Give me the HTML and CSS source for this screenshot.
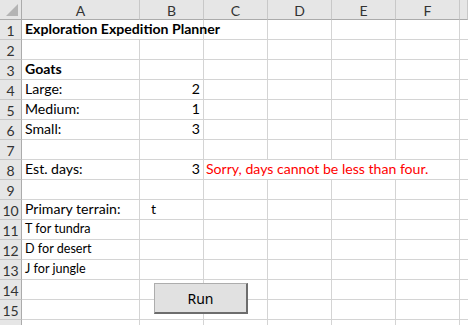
FILE: index.html
```html
<!DOCTYPE html>
<html>
<head>
<meta charset="utf-8">
<link rel="stylesheet" href="styles.css">
</head>
<body>
<div class="sheet">
  <div class="grid">
    <div class="corner"><svg width="14" height="14" viewBox="0 0 14 14"><polygon points="13,1 13,13 1,13" fill="#b4b4b4"/></svg></div>
    <div class="ch">A</div><div class="ch">B</div><div class="ch">C</div><div class="ch">D</div><div class="ch">E</div><div class="ch">F</div><div class="ch last"></div>

    <div class="rh">1</div><div class="c span2 bold">Exploration Expedition Planner</div><div class="c"></div><div class="c"></div><div class="c"></div><div class="c"></div><div class="c last"></div>
    <div class="rh">2</div><div class="c"></div><div class="c"></div><div class="c"></div><div class="c"></div><div class="c"></div><div class="c"></div><div class="c last"></div>
    <div class="rh">3</div><div class="c bold">Goats</div><div class="c"></div><div class="c"></div><div class="c"></div><div class="c"></div><div class="c"></div><div class="c last"></div>
    <div class="rh">4</div><div class="c">Large:</div><div class="c num">2</div><div class="c"></div><div class="c"></div><div class="c"></div><div class="c"></div><div class="c last"></div>
    <div class="rh">5</div><div class="c">Medium:</div><div class="c num">1</div><div class="c"></div><div class="c"></div><div class="c"></div><div class="c"></div><div class="c last"></div>
    <div class="rh">6</div><div class="c">Small:</div><div class="c num">3</div><div class="c"></div><div class="c"></div><div class="c"></div><div class="c"></div><div class="c last"></div>
    <div class="rh">7</div><div class="c"></div><div class="c"></div><div class="c"></div><div class="c"></div><div class="c"></div><div class="c"></div><div class="c last"></div>
    <div class="rh">8</div><div class="c">Est. days:</div><div class="c num">3</div><div class="c span4 red">Sorry, days cannot be less than four.</div><div class="c last"></div>
    <div class="rh">9</div><div class="c"></div><div class="c"></div><div class="c"></div><div class="c"></div><div class="c"></div><div class="c"></div><div class="c last"></div>
    <div class="rh">10</div><div class="c">Primary terrain:</div><div class="c indent">t</div><div class="c"></div><div class="c"></div><div class="c"></div><div class="c"></div><div class="c last"></div>
    <div class="rh">11</div><div class="c small">T for tundra</div><div class="c"></div><div class="c"></div><div class="c"></div><div class="c"></div><div class="c"></div><div class="c last"></div>
    <div class="rh">12</div><div class="c small">D for desert</div><div class="c"></div><div class="c"></div><div class="c"></div><div class="c"></div><div class="c"></div><div class="c last"></div>
    <div class="rh">13</div><div class="c small">J for jungle</div><div class="c"></div><div class="c"></div><div class="c"></div><div class="c"></div><div class="c"></div><div class="c last"></div>
    <div class="rh">14</div><div class="c"></div><div class="c"></div><div class="c"></div><div class="c"></div><div class="c"></div><div class="c"></div><div class="c last"></div>
    <div class="rh">15</div><div class="c"></div><div class="c"></div><div class="c"></div><div class="c"></div><div class="c"></div><div class="c"></div><div class="c last"></div>
    <div class="rh"></div><div class="c"></div><div class="c"></div><div class="c"></div><div class="c"></div><div class="c"></div><div class="c"></div><div class="c last"></div>
  </div>
  <button class="run">Run</button>
</div>
</body>
</html>
```

FILE: styles.css
```css
* { box-sizing: border-box; }
html, body { margin: 0; padding: 0; background: #fff; overflow: hidden; }
body { width: 468px; height: 325px; }
.sheet { position: relative; width: 468px; height: 325px; overflow: hidden; }
.grid {
  display: grid;
  grid-template-columns: 22px 118px 64px 64px 64px 64px 64px 1fr;
  grid-template-rows: 20px repeat(16, 20px);
  font-family: Lato, "Liberation Sans", sans-serif;
  font-size: 14.1px;
  color: #000;
}
.corner {
  background: #e6e6e6;
  border-right: 1px solid #ababab;
  border-bottom: 1px solid #ababab;
  display: flex; align-items: flex-end; justify-content: flex-end;
  padding: 0 2px 2px 0;
}
.ch {
  background: #e6e6e6;
  border-right: 1px solid #c8c8c8;
  border-bottom: 1px solid #ababab;
  display: flex; align-items: center; justify-content: center;
  color: #333;
  font-size: 14px;
  padding-top: 1px;
}
.rh {
  background: #e6e6e6;
  border-right: 1px solid #ababab;
  border-bottom: 1px solid #c8c8c8;
  display: flex; align-items: center; justify-content: center;
  color: #333;
  font-size: 14px;
  padding-top: 1px;
}
.c {
  border-right: 1px solid #d4d4d4;
  border-bottom: 1px solid #d4d4d4;
  display: flex; align-items: flex-end;
  padding: 0 3px 1px 3px;
  white-space: nowrap;
  line-height: 18px;
}
.c.last { border-right: none; }
.span2 { grid-column: span 2; }
.span4 { grid-column: span 4; }
.bold { font-weight: bold; }
.num { justify-content: flex-end; }
.indent { padding-left: 11px; }
.red { color: #ff0000; padding-left: 2px; }
.small { font-size: 12.6px; }
.run {
  position: absolute;
  left: 154px; top: 283px;
  width: 94px; height: 31px;
  background: #e1e1e1;
  border: 1px solid #adadad;
  border-right: 2px solid #6d6d6d;
  border-bottom: 2px solid #6d6d6d;
  font-family: "Noto Sans", "Liberation Sans", sans-serif;
  font-size: 14px;
  color: #000;
  padding: 0;
}
```
